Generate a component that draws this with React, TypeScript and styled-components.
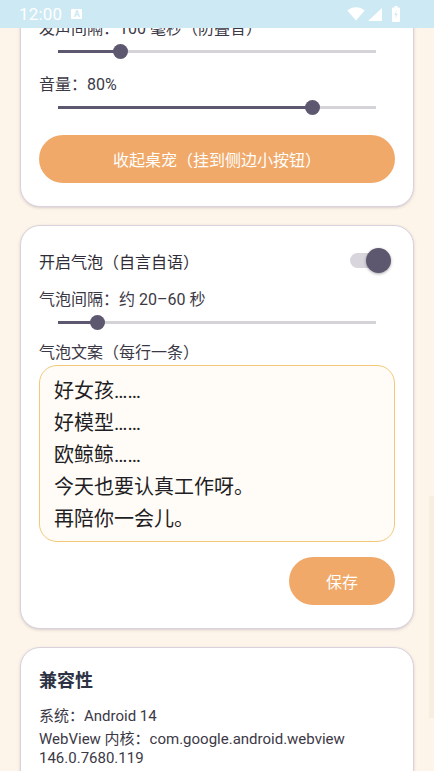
import React, { useLayoutEffect, useRef } from 'react';
import styled, { createGlobalStyle } from 'styled-components';

const GlobalStyle = createGlobalStyle`
  * { box-sizing: border-box; }
  html, body { margin: 0; padding: 0; height: 100%; }
  body {
    font-family: Roboto, "Noto Sans CJK SC", sans-serif;
    background: #fdf5e9;
    overflow: hidden;
  }
  #root { height: 100%; }
`;

const Screen = styled.div`
  display: flex;
  flex-direction: column;
  height: 100vh;
`;

const StatusBar = styled.header`
  flex-shrink: 0;
  height: 28px;
  display: flex;
  align-items: center;
  justify-content: space-between;
  padding: 0 34px 0 19px;
  background: #cde9f4;
  color: #fff;
`;
const StatusLeft = styled.div`
  display: flex;
  align-items: center;
`;
const Clock = styled.span`
  font-size: 17px;
  line-height: 20px;
  letter-spacing: 0.2px;
`;
const NoticeIcon = styled.span`
  margin-left: 9px;
  width: 11px;
  height: 10px;
  border-radius: 1px;
  background: #fff;
  color: #cde9f4;
  font-size: 9px;
  font-weight: 700;
  line-height: 10px;
  text-align: center;
`;
const StatusRight = styled.div`
  display: flex;
  align-items: center;
  svg { display: block; }
`;

const Viewport = styled.main`
  position: relative;
  flex: 1;
  min-height: 0;
`;
const Scroller = styled.div`
  position: relative;
  height: 100%;
  overflow-y: auto;
  scrollbar-width: none;
  &::-webkit-scrollbar { display: none; }
`;
const ScrollThumb = styled.div`
  position: absolute;
  right: 0;
  top: 468px;
  width: 5px;
  height: 222px;
  background: rgba(150, 115, 60, 0.05);
  pointer-events: none;
`;

const Page = styled.div`
  display: flex;
  flex-direction: column;
  gap: 18px;
  padding: 20px 20px 80px;
`;

const Card = styled.section`
  display: flex;
  flex-direction: column;
  padding: 17px 18px 23px;
  background: #fff;
  border: 1px solid #d9d2de;
  border-radius: 20px;
  box-shadow: 0 1px 3px rgba(90, 70, 110, 0.22);
`;

const CardTitle = styled.h2`
  margin: 2px 0 0;
  font-size: 18px;
  line-height: 28px;
  font-weight: 700;
  color: #2d3345;
`;

const Label = styled.div<{ $gap?: number }>`
  margin-top: ${p => p.$gap ?? 0}px;
  font-size: 16px;
  line-height: 22px;
  color: #3c3946;
`;

const SliderRoot = styled.div`
  position: relative;
  display: flex;
  align-items: center;
  height: 22px;
  margin: 0 19px;
`;
const SliderFill = styled.div`
  height: 3px;
  background: #5e5770;
`;
const SliderRest = styled.div`
  flex: 1;
  height: 3px;
  background: #d5d3d8;
`;
const SliderThumb = styled.div`
  position: absolute;
  top: 50%;
  width: 15px;
  height: 15px;
  margin: -7.5px 0 0 -7.5px;
  border-radius: 50%;
  background: #5e5770;
`;

const Slider = ({ value }: { value: number }) => (
  <SliderRoot>
    <SliderFill style={{ width: `${value * 100}%` }} />
    <SliderRest />
    <SliderThumb style={{ left: `${value * 100}%` }} />
  </SliderRoot>
);

const ToggleRow = styled.div`
  display: flex;
  align-items: center;
  justify-content: space-between;
  height: 36px;
  font-size: 16px;
  color: #2f2c38;
`;
const Switch = styled.span`
  position: relative;
  flex-shrink: 0;
  width: 45px;
  height: 36px;
`;
const SwitchTrack = styled.span`
  position: absolute;
  left: 0;
  top: 10px;
  width: 36px;
  height: 15px;
  border-radius: 8px;
  background: #d8d6dc;
`;
const SwitchThumb = styled.span`
  position: absolute;
  left: 15.5px;
  top: 5px;
  width: 25px;
  height: 25px;
  border-radius: 50%;
  background: #5e5770;
  box-shadow: 0 1px 3px rgba(0, 0, 0, 0.35);
`;

const PhraseBox = styled.textarea`
  display: block;
  width: 100%;
  height: 177px;
  margin-top: 1px;
  padding: 9px 14px;
  border: 1px solid #f1c979;
  border-radius: 18px;
  background: #fffcf7;
  font-family: Roboto, "Noto Sans CJK SC", sans-serif;
  font-size: 20px;
  line-height: 32px;
  color: #1f1e25;
  resize: none;
  outline: none;
  overflow: hidden;
`;

const ButtonRow = styled.div<{ $gap?: number }>`
  display: flex;
  justify-content: flex-end;
  margin-top: ${p => p.$gap ?? 0}px;
`;
const PillButton = styled.button<{ $width?: number }>`
  width: ${p => (p.$width ? `${p.$width}px` : '100%')};
  height: 48px;
  border: none;
  border-radius: 24px;
  background: #f0a969;
  color: #fff;
  font-family: Roboto, "Noto Sans CJK SC", sans-serif;
  font-size: 16px;
  cursor: pointer;
`;

const Info = styled.p<{ $gap?: number }>`
  margin: ${p => p.$gap ?? 0}px 0 0;
  font-size: 15px;
  line-height: 19px;
  color: #3c3946;
`;

const phrases = ['好女孩……', '好模型……', '欧鲸鲸……', '今天也要认真工作呀。', '再陪你一会儿。'].join('\n');

const App = () => {
  const scrollRef = useRef<HTMLDivElement>(null);
  const anchorRef = useRef<HTMLDivElement>(null);

  // page is shown scrolled: the first label sits half under the status bar
  useLayoutEffect(() => {
    if (scrollRef.current && anchorRef.current) {
      scrollRef.current.scrollTop = anchorRef.current.offsetTop + 10;
    }
  }, []);

  return (
    <Screen>
      <GlobalStyle />
      <StatusBar>
        <StatusLeft>
          <Clock>12:00</Clock>
          <NoticeIcon>A</NoticeIcon>
        </StatusLeft>
        <StatusRight>
          <svg width="18" height="14" viewBox="0 0 18 14">
            <path d="M9 13.5 L0.3 3.6 A13 13 0 0 1 17.7 3.6 Z" fill="#fff" />
          </svg>
          <svg width="14" height="13" viewBox="0 0 14 13" style={{ marginLeft: 3 }}>
            <path d="M14 0 V13 H0 Z" fill="#fff" />
          </svg>
          <svg width="8" height="16" viewBox="0 0 8 16" style={{ marginLeft: 10 }}>
            <rect x="2.5" y="0" width="3" height="2" fill="#fff" />
            <rect x="0" y="1.5" width="8" height="14.5" rx="1" fill="#fff" />
            <path d="M4.6 4.5 L2.4 9 H3.9 L3.4 12.5 L5.6 7.8 H4.1 Z" fill="#cde9f4" />
          </svg>
        </StatusRight>
      </StatusBar>

      <Viewport>
        <Scroller ref={scrollRef}>
          <Page>
            <Card>
              <Label ref={anchorRef}>发声间隔：100 毫秒（防叠音）</Label>
              <Slider value={0.198} />
              <Label $gap={12}>音量：80%</Label>
              <Slider value={0.8} />
              <ButtonRow $gap={17}>
                <PillButton>收起桌宠（挂到侧边小按钮）</PillButton>
              </ButtonRow>
            </Card>

            <Card>
              <ToggleRow>
                开启气泡（自言自语）
                <Switch>
                  <SwitchTrack />
                  <SwitchThumb />
                </Switch>
              </ToggleRow>
              <Label $gap={10}>气泡间隔：约 20–60 秒</Label>
              <Slider value={0.125} />
              <Label $gap={9}>气泡文案（每行一条）</Label>
              <PhraseBox defaultValue={phrases} spellCheck={false} />
              <ButtonRow $gap={15}>
                <PillButton $width={106}>保存</PillButton>
              </ButtonRow>
            </Card>

            <Card>
              <CardTitle>兼容性</CardTitle>
              <Info $gap={12}>系统：Android 14</Info>
              <Info $gap={4}>WebView 内核：com.google.android.webview 146.0.7680.119</Info>
            </Card>
          </Page>
        </Scroller>
        <ScrollThumb />
      </Viewport>
    </Screen>
  );
};

export default App;
